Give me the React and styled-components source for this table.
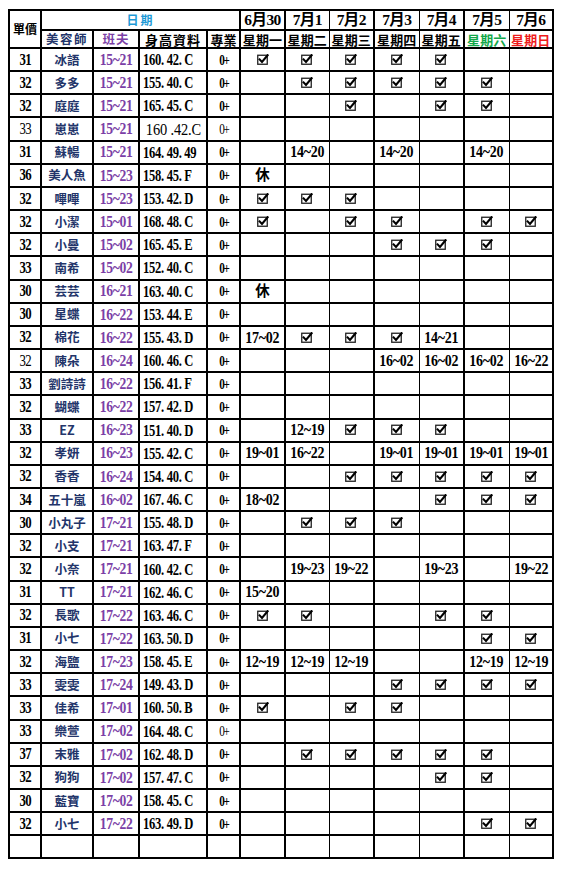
import React from "react";
import styled, { createGlobalStyle, css } from "styled-components";

const GlobalStyle = createGlobalStyle`
  html, body { margin: 0; padding: 0; background: #fff; }
`;

const Page = styled.div`
  padding: 9px 0 0 8px;
  width: 575px;
  box-sizing: border-box;
`;

const Sheet = styled.table`
  border-collapse: collapse;
  table-layout: fixed;
  width: 546px;
  border: 2px solid #000;
  font-family: "Liberation Serif", "Noto Sans CJK TC", serif;
  color: #000;
`;

const Row = styled.tr`
  height: ${(p) => p.$h}px;
`;

const Cell = styled.td`
  padding: 0;
  padding-left: ${(p) => (p.$align === "left" ? "3px" : "0")};
  border: 0;
  border-right: ${(p) => (p.$thin ? 1 : 2)}px solid #000;
  border-bottom: 2px solid #000;
  text-align: ${(p) => p.$align || "center"};
  vertical-align: middle;
  white-space: nowrap;
  overflow: hidden;
  line-height: 1;
`;

const HeadCell = styled(Cell).attrs({ as: "th" })`
  font-family: "Noto Sans CJK TC", sans-serif;
  font-weight: 700;
  font-size: ${(p) => p.$size || 13}px;
  color: ${(p) => p.$color || "#000"};
  letter-spacing: ${(p) => p.$ls || 0}px;
`;

const narrow = (k, origin = "center") => css`
  display: inline-block;
  transform: scaleX(${k});
  transform-origin: ${origin} center;
`;

const DateHead = styled(Cell).attrs({ as: "th" })`
  font-family: "Liberation Serif", "Noto Sans CJK TC", serif;
  font-weight: 700;
  font-size: 15.5px;
  letter-spacing: -0.6px;
`;

const Price = styled.span`
  font-family: "Liberation Serif", serif;
  font-weight: ${(p) => (p.$plain ? 400 : 700)};
  font-size: 16px;
  letter-spacing: -0.8px;
  ${narrow(0.8)}
`;

const Name = styled.span`
  font-family: "Noto Sans CJK TC", sans-serif;
  font-weight: 700;
  font-size: 12.5px;
  color: #23356a;
`;

const Shift = styled.span`
  font-family: "Liberation Serif", serif;
  font-weight: 700;
  font-size: 17.5px;
  letter-spacing: -0.4px;
  color: #7b3fa6;
  ${narrow(0.78)}
`;

const Measure = styled.span`
  font-family: "Liberation Serif", serif;
  font-weight: ${(p) => (p.$plain ? 400 : 700)};
  font-size: 17px;
  letter-spacing: ${(p) => (p.$plain ? -0.2 : -0.4)}px;
  ${(p) => narrow(p.$plain ? 0.85 : 0.74, p.$plain ? "center" : "left")}
`;

const Pro = styled.span`
  font-family: "Liberation Serif", serif;
  font-weight: ${(p) => (p.$plain ? 400 : 700)};
  font-size: 14px;
  letter-spacing: -1.5px;
  ${narrow(0.8)}
`;

const Time = styled.span`
  font-family: "Liberation Serif", serif;
  font-weight: 700;
  font-size: 17.5px;
  letter-spacing: -0.3px;
  ${narrow(0.8)}
`;

const Rest = styled.span`
  font-family: "Noto Sans CJK TC", sans-serif;
  font-weight: 700;
  font-size: 14.5px;
`;

const Box = styled.svg`
  display: inline-block;
  vertical-align: middle;
  margin-top: -3px;
`;

const Check = () => (
  <Box width="12" height="11" viewBox="0 0 12 11">
    <rect x="0.75" y="1.25" width="9.5" height="9" fill="#fff" stroke="#222" strokeWidth="1.3" />
    <path d="M2.6 5.4 L5 8 L10.6 1.2" stroke="#000" strokeWidth="2.1" fill="none" strokeLinecap="square" />
  </Box>
);

const colWidths = [32, 52, 46, 68, 33, 45, 44, 45, 45, 45, 45, 44];
const dayThin = [false, true, false, true, false, true, false];

const days = [
  { d: "6月30", w: "星期一" },
  { d: "7月1", w: "星期二" },
  { d: "7月2", w: "星期三" },
  { d: "7月3", w: "星期四" },
  { d: "7月4", w: "星期五" },
  { d: "7月5", w: "星期六", c: "#12a84a" },
  { d: "7月6", w: "星期日", c: "#ee1c1c" },
];

const V = "v";
const R = "休";
const rows = [
  ["31", "冰語", "15~21", "160. 42. C", "0+", [V, V, V, V, V, "", ""]],
  ["32", "多多", "15~21", "155. 40. C", "0+", ["", V, V, V, V, V, ""]],
  ["32", "庭庭", "15~21", "165. 45. C", "0+", ["", "", V, "", V, V, ""]],
  ["33", "崽崽", "15~21", "160 .42.C", "0+", ["", "", "", "", "", "", ""], "plain"],
  ["31", "蘇暢", "15~21", "164. 49. 49", "0+", ["", "14~20", "", "14~20", "", "14~20", ""]],
  ["36", "美人魚", "15~23", "158. 45. F", "0+", [R, "", "", "", "", "", ""]],
  ["32", "嗶嗶", "15~23", "153. 42. D", "0+", [V, V, V, "", "", "", ""]],
  ["32", "小潔", "15~01", "168. 48. C", "0+", [V, "", V, V, "", V, V]],
  ["32", "小曼", "15~02", "165. 45. E", "0+", ["", "", "", V, V, V, ""]],
  ["33", "南希", "15~02", "152. 40. C", "0+", ["", "", "", "", "", "", ""]],
  ["30", "芸芸", "16~21", "163. 40. C", "0+", [R, "", "", "", "", "", ""]],
  ["30", "星蝶", "16~22", "153. 44. E", "0+", ["", "", "", "", "", "", ""]],
  ["32", "棉花", "16~22", "155. 43. D", "0+", ["17~02", V, V, V, "14~21", "", ""]],
  ["32", "陳朵", "16~24", "160. 46. C", "0+", ["", "", "", "16~02", "16~02", "16~02", "16~22"], "price"],
  ["33", "劉詩詩", "16~22", "156. 41. F", "0+", ["", "", "", "", "", "", ""]],
  ["32", "蝴蝶", "16~22", "157. 42. D", "0+", ["", "", "", "", "", "", ""]],
  ["33", "EZ", "16~23", "151. 40. D", "0+", ["", "12~19", V, V, V, "", ""]],
  ["32", "孝妍", "16~23", "155. 42. C", "0+", ["19~01", "16~22", "", "19~01", "19~01", "19~01", "19~01"]],
  ["32", "香香", "16~24", "154. 40. C", "0+", ["", "", V, V, V, V, V]],
  ["34", "五十嵐", "16~02", "167. 46. C", "0+", ["18~02", "", "", "", V, V, V]],
  ["30", "小丸子", "17~21", "155. 48. D", "0+", ["", V, V, V, "", "", ""]],
  ["32", "小支", "17~21", "163. 47. F", "0+", ["", "", "", "", "", "", ""]],
  ["32", "小奈", "17~21", "160. 42. C", "0+", ["", "19~23", "19~22", "", "19~23", "", "19~22"]],
  ["31", "TT", "17~21", "162. 46. C", "0+", ["15~20", "", "", "", "", "", ""]],
  ["32", "長歌", "17~22", "163. 46. C", "0+", [V, V, "", "", V, V, ""]],
  ["31", "小七", "17~22", "163. 50. D", "0+", ["", "", "", "", "", V, V]],
  ["32", "海鹽", "17~23", "158. 45. E", "0+", ["12~19", "12~19", "12~19", "", "", "12~19", "12~19"]],
  ["33", "雯雯", "17~24", "149. 43. D", "0+", ["", "", "", V, V, V, V]],
  ["33", "佳希", "17~01", "160. 50. B", "0+", [V, "", V, V, "", "", ""]],
  ["33", "樂萱", "17~02", "164. 48. C", "0+", ["", "", "", "", "", "", ""], "pro"],
  ["37", "末雅", "17~02", "162. 48. D", "0+", ["", V, V, V, V, V, ""]],
  ["32", "狗狗", "17~02", "157. 47. C", "0+", ["", "", "", "", V, V, ""]],
  ["30", "藍寶", "17~02", "158. 45. C", "0+", ["", "", "", "", "", "", ""]],
  ["32", "小七", "17~22", "163. 49. D", "0+", ["", "", "", "", "", V, V]],
  ["", "", "", "", "", ["", "", "", "", "", "", ""]],
];

const DayValue = ({ v }) => {
  if (v === V) return <Check />;
  if (v === R) return <Rest>{v}</Rest>;
  if (!v) return null;
  return <Time>{v}</Time>;
};

export default function App() {
  return (
    <Page>
      <GlobalStyle />
      <Sheet>
        <colgroup>
          {colWidths.map((w, i) => (
            <col key={i} style={{ width: w }} />
          ))}
        </colgroup>
        <thead>
          <Row $h={20}>
            <HeadCell rowSpan={2} $size={12}>單價</HeadCell>
            <HeadCell colSpan={4} $size={12} $color="#1e9ad6" $ls={2}>日期</HeadCell>
            {days.map((d, i) => (
              <DateHead key={i} $thin={dayThin[i]}>{d.d}</DateHead>
            ))}
          </Row>
          <Row $h={18}>
            <HeadCell $size={12.5} $color="#23356a" $ls={1.5}>美容師</HeadCell>
            <HeadCell $size={12.5} $color="#7b3fa6" $ls={1}>班夫</HeadCell>
            <HeadCell $size={13} $ls={1}>身高資料</HeadCell>
            <HeadCell $size={13}>專業</HeadCell>
            {days.map((d, i) => (
              <HeadCell key={i} $size={13} $ls={0.2} $color={d.c} $thin={dayThin[i]}>{d.w}</HeadCell>
            ))}
          </Row>
        </thead>
        <tbody>
          {rows.map((r, ri) => {
            const [price, name, shift, measure, pro, sched, mode] = r;
            const plain = mode === "plain";
            return (
              <Row key={ri} $h={23.17}>
                <Cell><Price $plain={plain || mode === "price"}>{price}</Price></Cell>
                <Cell><Name>{name}</Name></Cell>
                <Cell><Shift>{shift}</Shift></Cell>
                <Cell $align={plain ? "center" : "left"}>
                  <Measure $plain={plain}>{measure}</Measure>
                </Cell>
                <Cell><Pro $plain={plain || mode === "pro"}>{pro}</Pro></Cell>
                {sched.map((v, i) => (
                  <Cell key={i} $thin={dayThin[i]}><DayValue v={v} /></Cell>
                ))}
              </Row>
            );
          })}
        </tbody>
      </Sheet>
    </Page>
  );
}
